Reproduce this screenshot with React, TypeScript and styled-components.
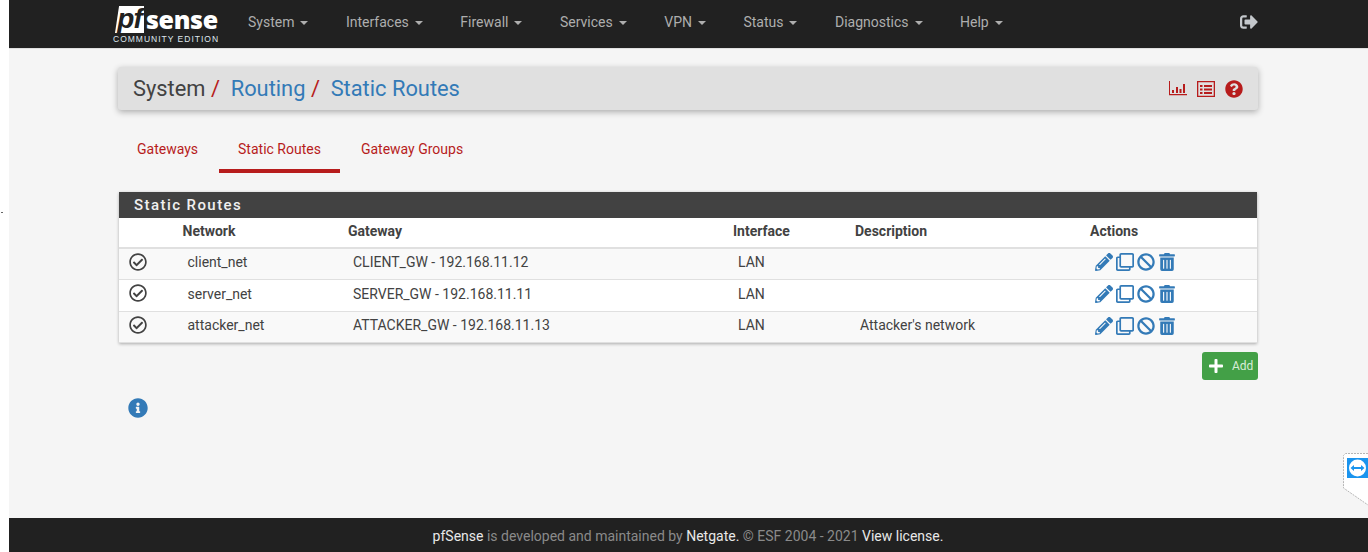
import { createGlobalStyle } from 'styled-components'
import styled from 'styled-components'
import {
  FaBan,
  FaInfoCircle,
  FaPencilAlt,
  FaPlus,
  FaQuestionCircle,
  FaRegCheckCircle,
  FaRegClone,
  FaSignOutAlt,
  FaTrashAlt,
} from 'react-icons/fa'

const GlobalStyle = createGlobalStyle`
  html, body {
    margin: 0;
    padding: 0;
    background: #fff;
    font-family: Roboto, "Liberation Sans", sans-serif;
    font-size: 14px;
    color: #424242;
  }
`

const Page = styled.div`
  margin-left: 9px;
  height: 552px;
  background: #f5f5f5;
  display: flex;
  flex-direction: column;
  overflow: hidden;
`

const Navbar = styled.nav`
  height: 49px;
  background: #212121;
  border-bottom: 1px solid #e0e0e0;
  box-sizing: border-box;
  display: flex;
  align-items: center;
  padding: 0 0 4px 104px;
  flex: none;
`

const Logo = styled.div`
  width: 106px;
  margin-right: 29px;
  display: flex;
  flex-direction: column;
  align-items: flex-start;
  color: #fff;
  padding-top: 6px;
`

const LogoMark = styled.div`
  display: flex;
  align-items: center;
  height: 27px;
  padding-left: 2px;
`

const LogoPf = styled.span`
  background: #fff;
  color: #212121;
  font: italic 700 28px/25px 'Liberation Sans', sans-serif;
  width: 29px;
  height: 27px;
  text-align: center;
  letter-spacing: -1px;
  clip-path: polygon(14% 0, 100% 0, 100% 100%, 0 100%);
  margin-right: 2px;
`

const LogoSense = styled.span`
  font: 800 25px/27px 'Open Sans', sans-serif;
  letter-spacing: -0.35px;
`

const LogoEdition = styled.span`
  font: 400 8.5px/10px 'Liberation Sans', sans-serif;
  letter-spacing: 1px;
  color: #dfe7ee;
  margin-top: 1px;
  white-space: nowrap;
`

const NavMenu = styled.ul`
  list-style: none;
  margin: 0;
  padding: 0;
  display: flex;
  flex: 1;
`

const NavItem = styled.li`
  color: #aeaeae;
  font-size: 14px;
  line-height: 20px;
  padding-right: 37.5px;
  white-space: nowrap;
`

const Caret = styled.span`
  display: inline-block;
  margin-left: 6px;
  vertical-align: middle;
  border-top: 4px solid #aeaeae;
  border-left: 4px solid transparent;
  border-right: 4px solid transparent;
`

const Logout = styled.div`
  color: #c4c8cc;
  font-size: 18px;
  display: flex;
  margin-right: 110px;
`

const Main = styled.main`
  width: 1140px;
  margin-left: 109px;
  flex: 1;
  position: relative;
`

const Breadcrumb = styled.header`
  margin-top: 18px;
  height: 43px;
  background: #e0e0e0;
  border-radius: 3px;
  box-shadow: 0 2px 6px rgba(0, 0, 0, 0.3);
  display: flex;
  align-items: center;
  justify-content: space-between;
  padding: 0 15px;
  box-sizing: border-box;
`

const Crumbs = styled.h1`
  margin: 0;
  font-size: 21.85px;
  font-weight: 400;
  display: flex;
  color: #424242;
`

const CrumbLink = styled.span`
  color: #337ab7;
`

const Slash = styled.span`
  color: #b71c1c;
  margin: 0 10.7px 0 5.5px;
`

const CrumbIcons = styled.div`
  display: flex;
  align-items: center;
  gap: 10px;
  color: #b71c1c;
`

const Tabs = styled.ul`
  list-style: none;
  margin: 20px 0 0;
  padding: 0;
  display: flex;
  height: 43px;
`

const Tab = styled.li<{ $active?: boolean }>`
  color: #b71c1c;
  font-size: 14px;
  line-height: 20px;
  padding: 9px 19px 0;
  margin-right: 2px;
  box-sizing: border-box;
  border-bottom: 4px solid ${(p) => (p.$active ? '#b71c1c' : 'transparent')};
`

const Panel = styled.section`
  margin: 19px 1px 0;
  background: #fff;
  box-shadow: 0 1px 3px rgba(0, 0, 0, 0.3);
`

const PanelTitle = styled.h2`
  margin: 0;
  height: 26px;
  background: #424242;
  color: #f0f0f0;
  font-size: 15px;
  font-weight: 500;
  line-height: 27px;
  letter-spacing: 1.43px;
  padding-left: 15px;
`

const Table = styled.table`
  width: 100%;
  border-collapse: collapse;
  table-layout: fixed;
`

const Th = styled.th<{ $w?: number }>`
  width: ${(p) => (p.$w ? `${p.$w}px` : 'auto')};
  height: 30px;
  padding: 0 0 3px;
  text-align: left;
  font-size: 14px;
  font-weight: 700;
  color: #424242;
  border-bottom: 2px solid #e0e0e0;
  box-sizing: border-box;
`

const Tr = styled.tr<{ $odd?: boolean }>`
  background: ${(p) => (p.$odd ? '#f9f9f9' : '#fff')};
`

const Td = styled.td`
  height: 31.5px;
  padding: 0 0 3px 5px;
  font-size: 14px;
  color: #424242;
  border-bottom: 1px solid #e0e0e0;
  box-sizing: border-box;
  vertical-align: middle;

  tr:first-child > & {
    padding-bottom: 5px;
  }
`

const StatusCell = styled.td`
  padding: 0 0 0 10px;
  border-bottom: 1px solid #e0e0e0;
  font-size: 18px;
  color: #424242;
`

const Actions = styled.div`
  display: flex;
  align-items: center;
  color: #337ab7;
  font-size: 18px;
  gap: 3px;
  padding-top: 1px;
`

const ButtonRow = styled.div`
  display: flex;
  justify-content: flex-end;
  margin-top: 9px;
`

const AddButton = styled.button`
  width: 56px;
  height: 28px;
  border: 0;
  border-radius: 3px;
  background: #43a047;
  color: #d7ecd8;
  font: 400 12px/28px Roboto, sans-serif;
  padding: 0 0 0 6px;
  display: flex;
  align-items: center;
  gap: 8px;
`

const InfoIcon = styled.div`
  color: #337ab7;
  font-size: 20px;
  display: flex;
  margin: 18px 0 0 10px;
`

const Footer = styled.footer`
  height: 34px;
  background: #212121;
  color: #8a8a8a;
  flex: none;
  font-size: 14px;
  line-height: 37px;
  text-align: center;
  padding-right: 1px;
`

const FooterLink = styled.span`
  color: #e8e8e8;
`

const RemoteTab = styled.div`
  position: fixed;
  right: 0;
  top: 453px;
  width: 25px;
  height: 53px;
`

const StrayDot = styled.span`
  position: fixed;
  left: 1px;
  top: 212px;
  width: 2px;
  height: 1px;
  background: #666;
`

const ChartIcon = () => (
  <svg width="18" height="15" viewBox="0 0 18 15" fill="currentColor">
    <path d="M0 0h1v13h17v1.300H0zM3 9h2v3H3zM7 6h2v6H7zM10.500 8h2v4h-2zM14 3h2v9h-2z" />
  </svg>
)

const ListIcon = () => (
  <svg width="18" height="16" viewBox="0 0 18 16" fill="currentColor">
    <path
      fillRule="evenodd"
      d="M0 0h18v16H0zM1.300 1.300v13.400h15.400V1.300zM3 4h2.500v2H3zM7 4h8v2H7zM3 7.500h2.500v2H3zM7 7.500h8v2H7zM3 11h2.500v2H3zM7 11h8v2H7z"
    />
  </svg>
)

const RemoteIcon = () => (
  <svg width="25" height="53" viewBox="0 0 25 53">
    <path d="M25 .5H2.500L.5 2.500V35l24.500 17" fill="#fff" stroke="#b5b5b5" strokeDasharray="2 1" />
    <rect x="4" y="5" width="21" height="20" fill="#1a94ee" />
    <circle cx="14.500" cy="15" r="8.500" fill="#fff" />
    <path d="M7.500 15l3.500-3v2h7v-2l3.500 3-3.500 3v-2h-7v2z" fill="#1a94ee" />
  </svg>
)

const routes = [
  { network: 'client_net', gateway: 'CLIENT_GW - 192.168.11.12', description: '' },
  { network: 'server_net', gateway: 'SERVER_GW - 192.168.11.11', description: '' },
  { network: 'attacker_net', gateway: 'ATTACKER_GW - 192.168.11.13', description: "Attacker's network" },
]

const menu = ['System', 'Interfaces', 'Firewall', 'Services', 'VPN', 'Status', 'Diagnostics', 'Help']

export default function App() {
  return (
    <>
      <GlobalStyle />
      <StrayDot />
      <Page>
        <Navbar>
          <Logo>
            <LogoMark>
              <LogoPf>pf</LogoPf>
              <LogoSense>sense</LogoSense>
            </LogoMark>
            <LogoEdition>COMMUNITY EDITION</LogoEdition>
          </Logo>
          <NavMenu>
            {menu.map((item) => (
              <NavItem key={item}>
                {item}
                <Caret />
              </NavItem>
            ))}
          </NavMenu>
          <Logout>
            <FaSignOutAlt />
          </Logout>
        </Navbar>

        <Main>
          <Breadcrumb>
            <Crumbs>
              System
              <Slash>/</Slash>
              <CrumbLink>Routing</CrumbLink>
              <Slash>/</Slash>
              <CrumbLink>Static Routes</CrumbLink>
            </Crumbs>
            <CrumbIcons>
              <ChartIcon />
              <ListIcon />
              <FaQuestionCircle size={18} />
            </CrumbIcons>
          </Breadcrumb>

          <Tabs>
            <Tab>Gateways</Tab>
            <Tab $active>Static Routes</Tab>
            <Tab>Gateway Groups</Tab>
          </Tabs>

          <Panel>
            <PanelTitle>Static Routes</PanelTitle>
            <Table>
              <thead>
                <tr>
                  <Th $w={63.5} />
                  <Th $w={165.5}>Network</Th>
                  <Th $w={385}>Gateway</Th>
                  <Th $w={122}>Interface</Th>
                  <Th $w={235}>Description</Th>
                  <Th>Actions</Th>
                </tr>
              </thead>
              <tbody>
                {routes.map((route, i) => (
                  <Tr key={route.network} $odd={i % 2 === 0}>
                    <StatusCell>
                      <FaRegCheckCircle />
                    </StatusCell>
                    <Td>{route.network}</Td>
                    <Td>{route.gateway}</Td>
                    <Td>LAN</Td>
                    <Td>{route.description}</Td>
                    <Td>
                      <Actions>
                        <FaPencilAlt />
                        <FaRegClone />
                        <FaBan />
                        <FaTrashAlt />
                      </Actions>
                    </Td>
                  </Tr>
                ))}
              </tbody>
            </Table>
          </Panel>

          <ButtonRow>
            <AddButton>
              <FaPlus size={16} color="#fff" />
              Add
            </AddButton>
          </ButtonRow>

          <InfoIcon>
            <FaInfoCircle />
          </InfoIcon>
        </Main>

        <Footer>
          <FooterLink>pfSense</FooterLink> is developed and maintained by{' '}
          <FooterLink>Netgate.</FooterLink> © ESF 2004 - 2021 <FooterLink>View license.</FooterLink>
        </Footer>
      </Page>
      <RemoteTab>
        <RemoteIcon />
      </RemoteTab>
    </>
  )
}
